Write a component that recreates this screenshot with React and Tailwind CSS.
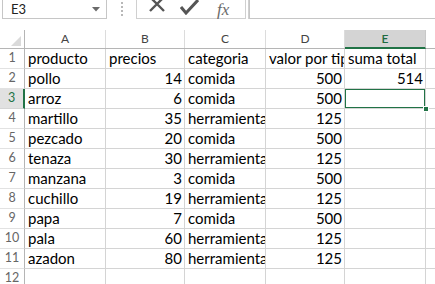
const rows = [
  ['producto', 'precios', 'categoria', 'valor por tipo', 'suma total'],
  ['pollo', 14, 'comida', 500, 514],
  ['arroz', 6, 'comida', 500, ''],
  ['martillo', 35, 'herramienta', 125, ''],
  ['pezcado', 20, 'comida', 500, ''],
  ['tenaza', 30, 'herramienta', 125, ''],
  ['manzana', 3, 'comida', 500, ''],
  ['cuchillo', 19, 'herramienta', 125, ''],
  ['papa', 7, 'comida', 500, ''],
  ['pala', 60, 'herramienta', 125, ''],
  ['azadon', 80, 'herramienta', 125, ''],
  ['', '', '', '', ''],
]

const cols = ['A', 'B', 'C', 'D', 'E']
const gridCols = 'grid grid-cols-[25px_81px_79px_81px_79px_81px_1fr]'

function FormulaBar() {
  return (
    <div className="flex h-[19px] items-stretch">
      <div className="ml-[2px] flex w-[105px] items-center justify-between border-x border-b border-[#c6c6c6] pl-[8px] pr-[6px] text-[13px] text-[#222]">
        <span>E3</span>
        <svg width="8" height="5" viewBox="0 0 8 5">
          <path d="M0 0h8L4 4.5z" fill="#6a6a6a" />
        </svg>
      </div>
      <div className="flex w-[29px] flex-col items-center justify-center gap-[2px] pb-[2px]">
        <span className="h-[2px] w-[2px] bg-[#b8b8b8]" />
        <span className="h-[2px] w-[2px] bg-[#b8b8b8]" />
        <span className="h-[2px] w-[2px] bg-[#b8b8b8]" />
        <span className="h-[2px] w-[2px] bg-[#b8b8b8]" />
      </div>
      <div className="flex w-[109px] items-start border-l border-b border-[#d0d0d0]">
        <svg className="ml-[11px] -mt-[3px]" width="18" height="16" viewBox="0 0 18 16">
          <path d="M2 0l14 14M16 0L2 14" stroke="#555" strokeWidth="2.4" fill="none" />
        </svg>
        <svg className="ml-[14px] -mt-[1px]" width="19" height="16" viewBox="0 0 19 16">
          <path d="M1 8l5 6L18 1" stroke="#555" strokeWidth="3" fill="none" />
        </svg>
        <span className="ml-[18px] mt-[1px] font-['Liberation_Serif',serif] text-[17px] italic leading-[17px] text-[#6a6a6a]">
          fx
        </span>
      </div>
      <div className="w-[4px] border-x border-[#d0d0d0]" />
      <div className="flex-1 border-b border-l border-[#c6c6c6] bg-white" />
    </div>
  )
}

function Header() {
  return (
    <div className={`${gridCols} h-[19px] border-b border-[#b5b5b5] text-[12px] text-[#444]`}>
      <div className="relative border-r border-[#b5b5b5]">
        <svg className="absolute bottom-[2px] right-[3px]" width="10" height="10" viewBox="0 0 10 10">
          <path d="M10 0v10H0z" fill="#dadada" />
        </svg>
      </div>
      {cols.map((c) =>
        c === 'E' ? (
          <div
            key={c}
            className="-mb-[1px] flex items-center justify-center border-b-2 border-r border-b-[#217346] border-r-[#c8c8c8] bg-[#d4d4d4] font-semibold text-[#1e6b41]"
          >
            {c}
          </div>
        ) : (
          <div key={c} className="flex items-center justify-center border-r border-[#dcdcdc]">
            {c}
          </div>
        )
      )}
      <div />
    </div>
  )
}

function Row({ cells, n }) {
  const active = n === 3
  return (
    <div className={`${gridCols} h-[20px]`}>
      <div
        className={`flex items-center justify-center border-b text-[12.5px] ${
          active
            ? 'border-r-2 border-b-[#d4d4d4] border-r-[#217346] bg-[#e1e1e1] text-[#217346]'
            : 'border-r border-b-[#e2e2e2] border-r-[#b5b5b5] text-[#666]'
        }`}
      >
        {n}
      </div>
      {cells.map((v, i) => {
        const num = typeof v === 'number'
        return (
          <div
            key={i}
            className={`relative flex items-center overflow-hidden whitespace-nowrap border-b border-r border-[#d4d4d4] pl-[3px] pr-[2px] text-black ${
              num ? 'justify-end' : 'justify-start'
            }`}
          >
            {v}
            {active && i === 4 && (
              <div className="pointer-events-none absolute -left-[1px] -top-[1px] h-[21px] w-[82px] border-2 border-[#217346]" />
            )}
          </div>
        )
      })}
      <div className="border-b border-[#d4d4d4]" />
    </div>
  )
}

export default function App() {
  return (
    <div className="relative h-[284px] w-[435px] overflow-hidden bg-white font-['Lato',sans-serif] text-[15px] leading-none">
      <FormulaBar />
      <div className="h-[11px]" />
      <Header />
      {rows.map((r, i) => (
        <Row key={i} cells={r} n={i + 1} />
      ))}
      <div className="absolute left-[423px] top-[106px] h-[6px] w-[6px] border border-white bg-[#217346]" />
    </div>
  )
}
